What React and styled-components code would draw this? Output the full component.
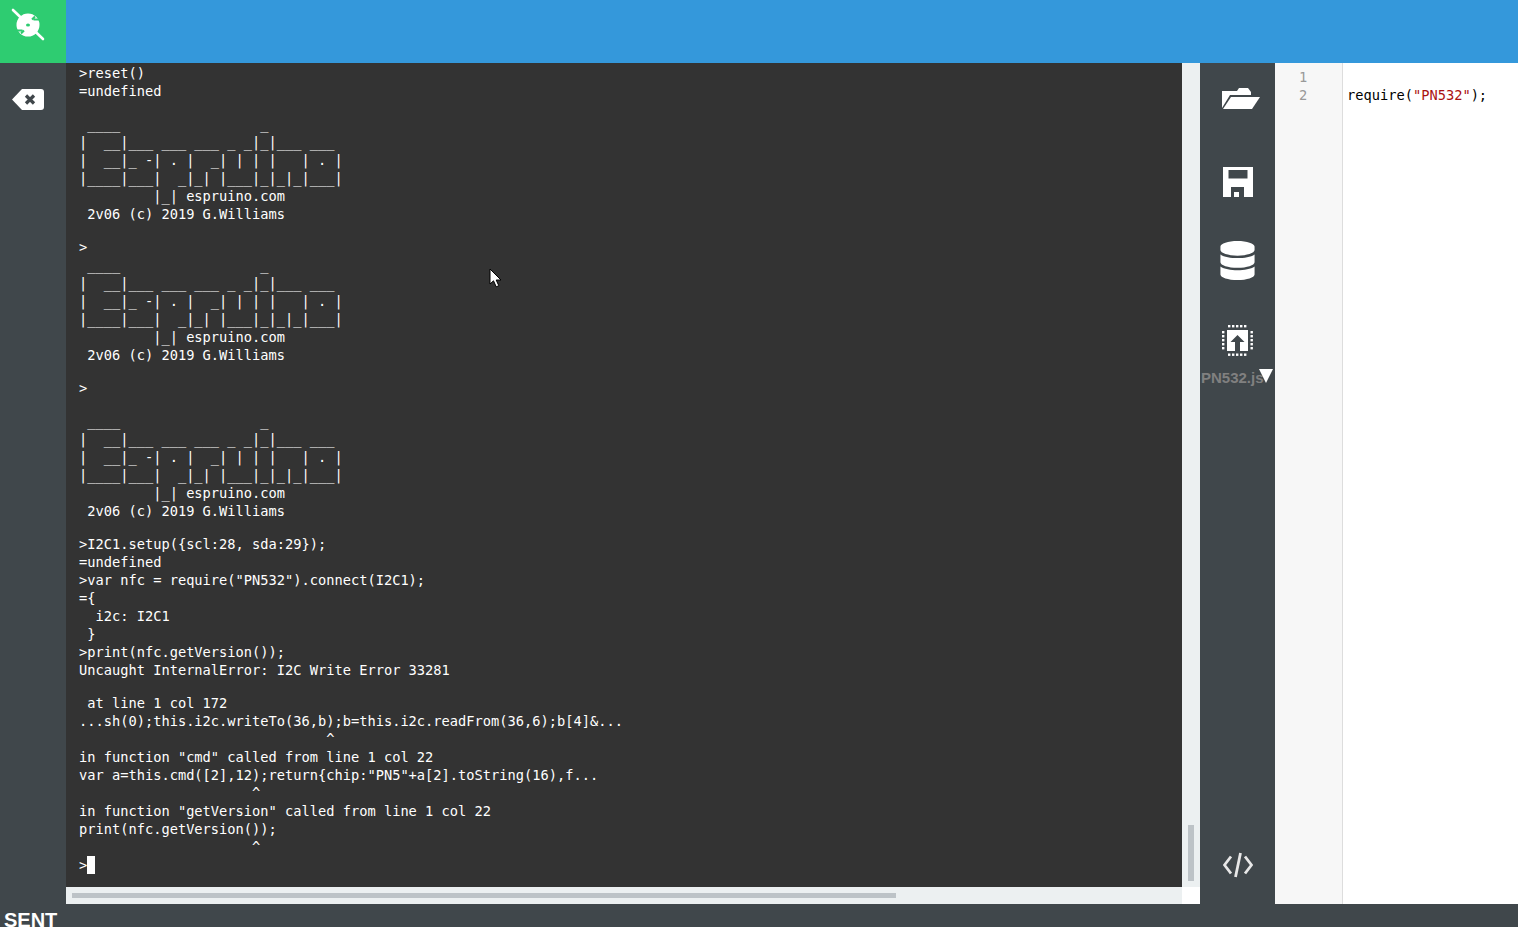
import styled, { createGlobalStyle } from 'styled-components'
import { FaDatabase } from 'react-icons/fa'

const GlobalStyle = createGlobalStyle`
  html, body {
    margin: 0;
    padding: 0;
    height: 100%;
    overflow: hidden;
    background: #fff;
  }
`

const banner = [
  ' ____                 _',
  '|  __|___ ___ ___ _ _|_|___ ___',
  '|  __|_ -| . |  _| | | |   | . |',
  '|____|___|  _|_| |___|_|_|_|___|',
  '         |_| espruino.com',
  ' 2v06 (c) 2019 G.Williams',
]

const terminalLines = [
  '>reset()',
  '=undefined',
  '',
  ...banner,
  '',
  '>',
  ...banner,
  '',
  '>',
  '',
  ...banner,
  '',
  '>I2C1.setup({scl:28, sda:29});',
  '=undefined',
  '>var nfc = require("PN532").connect(I2C1);',
  '={',
  '  i2c: I2C1',
  ' }',
  '>print(nfc.getVersion());',
  'Uncaught InternalError: I2C Write Error 33281',
  '',
  ' at line 1 col 172',
  '...sh(0);this.i2c.writeTo(36,b);b=this.i2c.readFrom(36,6);b[4]&...',
  '                              ^',
  'in function "cmd" called from line 1 col 22',
  'var a=this.cmd([2],12);return{chip:"PN5"+a[2].toString(16),f...',
  '                     ^',
  'in function "getVersion" called from line 1 col 22',
  'print(nfc.getVersion());',
  '                     ^',
]

export default function App() {
  return (
    <Page>
      <GlobalStyle />
      <Header>
        <ConnectButton>
          <svg width="66" height="63" viewBox="0 0 66 63">
            <circle cx="28" cy="25" r="11.500" fill="#fff" />
            <path d="M13 10L43 39" stroke="#fff" strokeWidth="2.600" strokeLinecap="round" />
            <path d="M26 25a2 1.600 0 1 0 4 0a2 1.600 0 1 0-4 0Z" fill="#2ecc71" />
            <path d="M17 30.500h5.500M21 33.500l3-3M39 19.500h-5.500M35 16.500l-3 3" stroke="#2ecc71" strokeWidth="2" />
          </svg>
        </ConnectButton>
      </Header>

      <Main>
        <LeftBar>
          <svg width="32" height="21" viewBox="0 0 32 21">
            <path d="M10 0H29a3 3 0 0 1 3 3V18a3 3 0 0 1-3 3H10L0 10.500Z" fill="#fff" />
            <path d="M14 6.500L22 14.500M22 6.500L14 14.500" stroke="#40474b" strokeWidth="3.200" />
          </svg>
        </LeftBar>

        <TerminalPane>
          <Terminal>
            {terminalLines.map((line, i) => (
              <TermLine key={i} $empty={line === ''}>{line}</TermLine>
            ))}
            <TermLine>
              &gt;<Caret />
            </TermLine>
            <MousePointer width="13" height="20" viewBox="0 0 13 20">
              <path d="M1 1V16L4.500 12.800L7.200 18.800L9.800 17.700L7.200 12H12Z" fill="#fff" stroke="#000" strokeWidth="1" />
            </MousePointer>
          </Terminal>
          <VerticalTrack>
            <VerticalThumb />
          </VerticalTrack>
          <HorizontalTrack>
            <HorizontalThumb />
          </HorizontalTrack>
          <ScrollCorner />
        </TerminalPane>

        <ToolBar>
          <ToolIcon $top={24} $shift={3}>
            <svg width="38" height="22" viewBox="0 0 38 22" fill="#fff">
              <path d="M0 4H15L17 1H26L29 5V8H8L0 21Z" />
              <path d="M9 10H38L30 22H1Z" />
            </svg>
          </ToolIcon>
          <ToolIcon $top={58}>
            <svg width="30" height="30" viewBox="0 0 30 30">
              <path
                fill="#fff"
                fillRule="evenodd"
                d="M0 0H30V30H0ZM5.500 3V11.500H24.500V3ZM8 20V30H21V20Z"
              />
              <rect x="11" y="25" width="5" height="5" fill="#fff" />
            </svg>
          </ToolIcon>
          <ToolIcon $top={44}>
            <FaDatabase size={39} color="#fff" />
          </ToolIcon>
          <ToolIcon $top={45}>
            <svg width="31" height="31" viewBox="0 0 31 31" fill="#fff">
              {[7, 11, 15, 19, 23].map(p => (
                <g key={p}>
                  <rect x={p - 1} y="0" width="2.400" height="2.400" />
                  <rect x={p - 1} y="28.500" width="2.400" height="2.400" />
                  <rect x="0" y={p - 1} width="2.400" height="2.400" />
                  <rect x="28.500" y={p - 1} width="2.400" height="2.400" />
                </g>
              ))}
              <rect x="5" y="5" width="21" height="21" />
              <path d="M15.500 10L8.500 17H13V26H18V17H22.500Z" fill="#40474b" />
            </svg>
          </ToolIcon>
          <ModuleRow>
            <ModuleName>PN532.js</ModuleName>
            <ModuleArrow />
          </ModuleRow>
          <CodeToggle>
            <svg width="30" height="26" viewBox="0 0 30 26" fill="none" stroke="#e8e8e8" strokeWidth="2.800">
              <path d="M8 4.500L1.500 13L8 21.500" />
              <path d="M17.500 1L12.500 25" />
              <path d="M22 4.500L28.500 13L22 21.500" />
            </svg>
          </CodeToggle>
        </ToolBar>

        <Editor>
          <Gutter>
            <LineNumber>1</LineNumber>
            <LineNumber>2</LineNumber>
          </Gutter>
          <CodeArea>
            <CodeLine />
            <CodeLine>
              require(<Str>"PN532"</Str>);
            </CodeLine>
          </CodeArea>
        </Editor>
      </Main>

      <Footer>SENT</Footer>
    </Page>
  )
}

const Page = styled.div`
  display: flex;
  flex-direction: column;
  width: 1518px;
  height: 927px;
  overflow: hidden;
`

const Header = styled.header`
  display: flex;
  flex: none;
  height: 63px;
  background-color: #3498db;
`

const ConnectButton = styled.div`
  width: 66px;
  height: 63px;
  background-color: #2ecc71;

  svg {
    display: block;
  }
`

const Main = styled.div`
  display: flex;
  flex: none;
  height: 841px;
`

const LeftBar = styled.aside`
  flex: none;
  width: 66px;
  padding-top: 26px;
  box-sizing: border-box;
  background-color: #40474b;
  text-align: center;

  svg {
    display: block;
    margin: 0 0 0 12px;
  }
`

const TerminalPane = styled.section`
  display: grid;
  flex: none;
  width: 1134px;
  grid-template-columns: 1116px 18px;
  grid-template-rows: 824px 17px;
`

const Terminal = styled.div`
  position: relative;
  overflow: hidden;
  padding: 1px 0 0 13px;
  box-sizing: border-box;
  background-color: #333;
  color: #fff;
  font-family: 'DejaVu Sans Mono', monospace;
  font-size: 13.700px;
`

const TermLine = styled.div`
  height: ${p => (p.$empty ? '15px' : '18px')};
  line-height: 18px;
  white-space: pre;
`

const Caret = styled.span`
  display: inline-block;
  width: 8px;
  height: 18px;
  background-color: #fff;
  vertical-align: top;
`

const MousePointer = styled.svg`
  position: absolute;
  left: 423px;
  top: 205px;
`

const VerticalTrack = styled.div`
  display: flex;
  justify-content: center;
  align-items: flex-end;
  padding-bottom: 6px;
  box-sizing: border-box;
  background-color: #ecf0f1;
`

const VerticalThumb = styled.div`
  width: 6px;
  height: 56px;
  background-color: #bdc3c7;
`

const HorizontalTrack = styled.div`
  padding: 6px 0 0 6px;
  box-sizing: border-box;
  background-color: #ecf0f1;
`

const HorizontalThumb = styled.div`
  width: 824px;
  height: 5px;
  background-color: #bdc3c7;
`

const ScrollCorner = styled.div`
  background-color: #fff;
`

const ToolBar = styled.aside`
  display: flex;
  flex: none;
  flex-direction: column;
  align-items: center;
  width: 75px;
  background-color: #40474b;
`

const ToolIcon = styled.div`
  display: flex;
  justify-content: center;
  margin-top: ${p => p.$top}px;
  margin-left: ${p => (p.$shift || 0) * 2}px;
  line-height: 0;
`

const ModuleRow = styled.div`
  display: flex;
  align-items: flex-start;
  align-self: flex-start;
  margin-top: 13px;
  margin-left: 1px;
`

const ModuleName = styled.span`
  color: #808080;
  font-family: 'Liberation Sans', Arial, sans-serif;
  font-size: 15px;
  font-weight: bold;
  line-height: 18px;
`

const ModuleArrow = styled.span`
  width: 0;
  height: 0;
  margin: 0 0 0 -5px;
  border-top: 14px solid #fff;
  border-left: 7px solid transparent;
  border-right: 7px solid transparent;
`

const CodeToggle = styled.div`
  margin-top: auto;
  margin-bottom: 26px;
  line-height: 0;
`

const Editor = styled.section`
  display: flex;
  flex: 1;
  font-family: 'DejaVu Sans Mono', monospace;
  font-size: 13.700px;
  line-height: 18px;
`

const Gutter = styled.div`
  flex: none;
  width: 68px;
  padding-top: 5px;
  box-sizing: border-box;
  border-right: 1px solid #ddd;
  background-color: #f7f7f7;
  color: #999;
`

const LineNumber = styled.div`
  height: 18px;
  padding-left: 24px;
`

const CodeArea = styled.div`
  flex: 1;
  padding: 5px 0 0 4px;
  background-color: #fff;
  color: #000;
`

const CodeLine = styled.div`
  height: 18px;
  white-space: pre;
`

const Str = styled.span`
  color: #a11;
`

const Footer = styled.footer`
  flex: none;
  height: 23px;
  padding: 5px 0 0 4px;
  box-sizing: border-box;
  overflow: hidden;
  background-color: #40474b;
  color: #fff;
  font-family: 'Liberation Sans', Arial, sans-serif;
  font-size: 20px;
  font-weight: bold;
  line-height: 23px;
`
